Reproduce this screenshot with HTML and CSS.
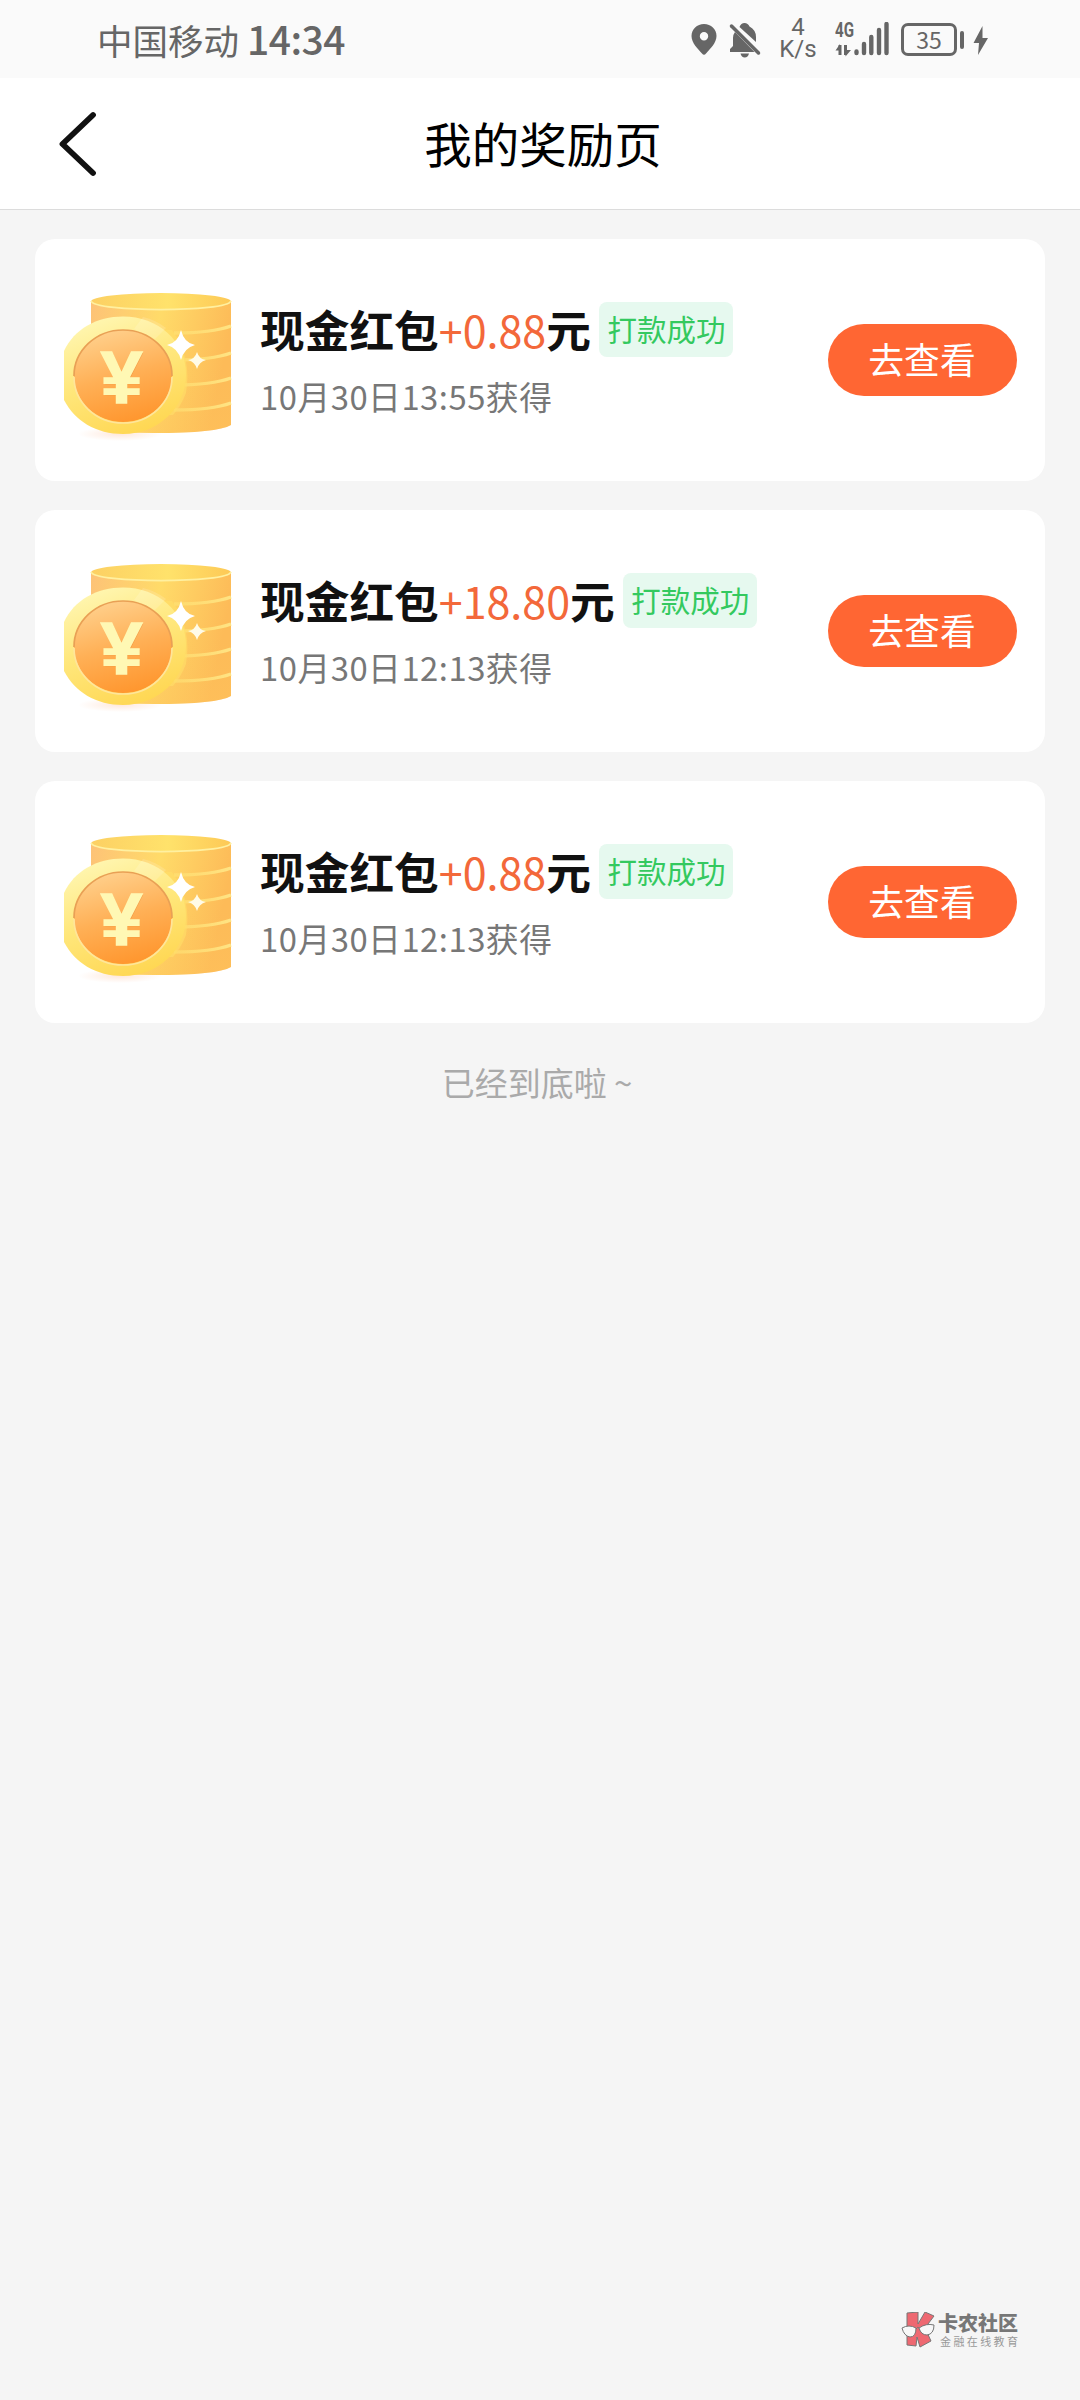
FILE: index.html
```html
<!DOCTYPE html>
<html lang="zh-CN">
<head>
<meta charset="utf-8">
<title>我的奖励页</title>
<link rel="stylesheet" href="styles.css">
</head>
<body>
<svg class="defs" width="0" height="0" aria-hidden="true">
  <defs>
    <linearGradient id="side" x1="0" y1="0" x2="1" y2=".2"><stop offset="0" stop-color="#fdc277"/><stop offset=".5" stop-color="#ffdb69"/><stop offset="1" stop-color="#fdbb58"/></linearGradient>
    <linearGradient id="shade" x1="0" y1="0" x2="0" y2="1"><stop offset=".5" stop-color="#ffc45c" stop-opacity="0"/><stop offset="1" stop-color="#ffc45c" stop-opacity=".4"/></linearGradient>
    <linearGradient id="lid" x1="0" y1="0" x2="1" y2="0"><stop offset="0" stop-color="#fcd063"/><stop offset=".55" stop-color="#ffe26b"/><stop offset="1" stop-color="#fdc956"/></linearGradient>
    <linearGradient id="rim" x1=".3" y1="0" x2=".7" y2="1"><stop offset="0" stop-color="#fff6b0"/><stop offset=".45" stop-color="#ffe77c"/><stop offset="1" stop-color="#ffd650"/></linearGradient>
    <linearGradient id="face" x1=".3" y1="0" x2=".6" y2="1"><stop offset="0" stop-color="#ffd08c"/><stop offset=".5" stop-color="#ffb056"/><stop offset="1" stop-color="#ff962e"/></linearGradient>
    <linearGradient id="line" x1="0" y1="0" x2="1" y2="0"><stop offset="0" stop-color="#ffe678" stop-opacity=".5"/><stop offset="1" stop-color="#ffe484"/></linearGradient>
    <radialGradient id="glow"><stop offset="0" stop-color="#ffb38a" stop-opacity=".3"/><stop offset="1" stop-color="#ffb38a" stop-opacity="0"/></radialGradient>
    <symbol id="coins" viewBox="0 0 176 176">
      <ellipse cx="58" cy="151" rx="42" ry="7" fill="url(#glow)"/>
      <path d="M29 18V140Q32 150 92 150Q155 150 169 142V18Z" fill="url(#side)"/>
      <path d="M29 18V140Q32 150 92 150Q155 150 169 142V18Z" fill="url(#shade)"/>
      <g fill="none" stroke="url(#line)" stroke-width="3.400">
        <path d="M112 50Q150 50 169 43"/><path d="M112 77Q150 77 169 70"/>
        <path d="M112 102Q150 102 169 95"/><path d="M112 127Q150 127 169 120"/>
      </g>
      <ellipse cx="99" cy="18.500" rx="70" ry="8.500" fill="url(#lid)"/>
      <path d="M29 18C33 29.500 165 29.500 169 18" fill="none" stroke="#fff0a0" stroke-width="1.800"/>
      <path d="M110 47Q130 74 124 110Q119 123 111 132H100V47Z" fill="#ffdf68" opacity=".6"/>
      <path d="M2 68C12 46 35 33.500 61 33.500C96 33.500 124 58 124 91.500C124 125 96 151 61 151C34 151 13 138 2 117Z" fill="url(#rim)"/>
      <path d="M72 46L81 34Q94 37 104 45L93 56Z" fill="#fff" opacity=".15"/>
      <ellipse cx="61" cy="93" rx="49" ry="46" fill="url(#face)"/>
      <path d="M12 93A49 46 0 0 1 110 93" fill="none" stroke="#e9a055" stroke-width="1.700"/>
      <path d="M12 94A49 46 0 0 0 110 94" fill="none" stroke="#ffe59a" stroke-width="1.700"/>
      <text x="60.500" y="120.500" class="yen yen-shadow">¥</text>
      <text x="59.500" y="119.500" class="yen">¥</text>
      <path d="M119 47Q122 60 133 62Q122 65 119 77Q116 65 105 62Q116 60 119 47Z" fill="#fff"/>
      <path d="M135 69Q137 76 144 77Q137 79 135 86Q133 79 126 77Q133 76 135 69Z" fill="#fffbe8"/>
    </symbol>
  </defs>
</svg>

<header class="status">
  <div class="carrier">中国移动 <span class="clock">14:34</span></div>
  <div class="indicators">
    <svg class="pin" width="26" height="33" viewBox="0 0 26 33"><path fill-rule="evenodd" d="M13 1C6 1 .5 6.300.5 13C.5 20 7 26 11 30.500Q13 33 15 30.500C19 26 25.500 20 25.500 13C25.500 6.300 20 1 13 1ZM13 9A4.200 4.200 0 1 1 13 17.400A4.200 4.200 0 1 1 13 9Z"/></svg>
    <svg class="bell" width="32" height="36" viewBox="0 0 32 36"><path d="M6 10L25.500 30H1V27L4 24V16Q4 12.500 6 10ZM10.500 5Q12 1 15.500 1Q19 1 20.500 4.500Q27 8 27 15V20Z"/><path d="M11.500 31.500H20Q19 35.500 15.700 35.500Q12.500 35.500 11.500 31.500Z"/><path d="M2.500 4L29.500 31" fill="none" stroke="#666" stroke-width="3.500" stroke-linecap="round"/></svg>
    <div class="speed"><span>4</span><span>K/s</span></div>
    <div class="signal">
      <span class="network">4G</span>
      <svg width="54" height="36" viewBox="0 0 54 36"><path d="M5 23V33M10.500 23V33" fill="none" stroke="#666" stroke-width="3"/><path d="M5 22L.5 28.500H5ZM10.500 34.500L16 28H10.500Z"/><path d="M21.500 29.500V31M29 22V31M36.300 15V31M44 8V31M51.500 2V31" fill="none" stroke="#666" stroke-width="4.400" stroke-linecap="round"/></svg>
    </div>
    <div class="battery">35</div><i class="terminal"></i>
    <svg class="bolt" width="16" height="30" viewBox="0 0 16 30"><path d="M9.500 0L.5 17H6L5 29L15 12H9.500Z"/></svg>
  </div>
</header>

<nav class="navbar">
  <svg class="back" width="40" height="66" viewBox="0 0 40 66"><path d="M36 4L5.500 33L36 62" fill="none" stroke="#111" stroke-width="5.800" stroke-linecap="round" stroke-linejoin="round"/></svg>
  <h1>我的奖励页</h1>
</nav>

<main class="list">
  <section class="card">
    <svg class="coins"><use href="#coins"/></svg>
    <div class="info">
      <div class="title"><span>现金红包</span><span class="amount">+0.88</span><span>元</span><span class="tag">打款成功</span></div>
      <div class="date">10月30日13:55获得</div>
    </div>
    <button class="view">去查看</button>
  </section>
  <section class="card">
    <svg class="coins"><use href="#coins"/></svg>
    <div class="info">
      <div class="title"><span>现金红包</span><span class="amount">+18.80</span><span>元</span><span class="tag">打款成功</span></div>
      <div class="date">10月30日12:13获得</div>
    </div>
    <button class="view">去查看</button>
  </section>
  <section class="card">
    <svg class="coins"><use href="#coins"/></svg>
    <div class="info">
      <div class="title"><span>现金红包</span><span class="amount">+0.88</span><span>元</span><span class="tag">打款成功</span></div>
      <div class="date">10月30日12:13获得</div>
    </div>
    <button class="view">去查看</button>
  </section>
  <p class="end">已经到底啦 ~</p>
</main>

<footer class="brand">
  <svg width="34" height="36" viewBox="0 0 34 36"><path d="M6 1L17 0V12L24 0L33 4L24 16L30 29L19 35L16 25L15 34L6 33Z" fill="#ee6871" stroke="#777" stroke-width="1"/><g fill="#f8f8f8" stroke="#777" stroke-width="1"><path d="M1 16Q8 12 15 16Q15 25 9 25Q3 24 1 16Z"/><path d="M18 16Q25 11 33 13Q33 22 26 23Q20 23 18 16Z"/><path d="M15 17Q17 14 18 16" fill="none"/></g></svg>
  <div class="brand-text"><b>卡农社区</b><span>金融在线教育</span></div>
</footer>
</body>
</html>
```
FILE: styles.css
```css
* { box-sizing: border-box; }
body {
  margin: 0;
  width: 1080px;
  height: 2400px;
  display: flex;
  flex-direction: column;
  background: #f5f5f5;
  font-family: "Noto Sans CJK SC", sans-serif;
  color: #111;
}
.defs { position: absolute; }

.status {
  height: 78px;
  flex: none;
  padding: 0 91px 0 97px;
  display: flex;
  justify-content: space-between;
  background: #fafafa;
  color: #666;
  fill: #666;
}
.carrier { font-size: 35.5px; line-height: 79px; white-space: nowrap; }
.clock { font-size: 39px; font-weight: 500; letter-spacing: -.5px; line-height: 1; }
.indicators { display: flex; align-items: flex-start; }
.pin { margin-top: 23px; }
.bell { margin: 22px 0 0 12px; }
.speed {
  width: 40px;
  margin: 17px 0 0 17px;
  display: flex;
  flex-direction: column;
  align-items: center;
  gap: 2px;
  font: 400 24px/20px Roboto, sans-serif;
}
.signal { position: relative; width: 54px; height: 36px; margin: 22px 0 0 17px; }
.signal svg { display: block; }
.network { position: absolute; left: 0; top: -1px; font: 700 21px/18px Roboto, sans-serif; transform: scaleX(.72); transform-origin: left; }
.battery {
  width: 56px;
  height: 33px;
  margin: 23px 0 0 12px;
  border: 3px solid #666;
  border-radius: 7px;
  font-size: 23px;
  line-height: 26px;
  text-align: center;
}
.terminal { width: 4px; height: 18px; margin: 31px 0 0 3px; border-radius: 2px; background: #666; }
.bolt { margin: 26px 0 0 9px; }

.navbar {
  height: 132px;
  flex: none;
  padding: 0 57px;
  display: grid;
  grid-template-columns: 40px 1fr 40px;
  align-items: center;
  background: #fff;
  border-bottom: 1px solid #dcdcdc;
}
.navbar h1 { margin: 0 0 2px; font-size: 47.5px; font-weight: 400; line-height: 70px; text-align: center; color: #000; padding-left: 6px; }

.list { padding: 29px 35px 0; display: flex; flex-direction: column; gap: 29px; }
.card {
  height: 242px;
  padding: 0 28px 0 27px;
  display: flex;
  align-items: center;
  background: #fff;
  border-radius: 20px;
}
.coins { width: 176px; height: 176px; flex: none; margin-top: 22px; }
.yen { font: 700 75px "Liberation Sans", sans-serif; text-anchor: middle; fill: #fff8b4; stroke: #fff8b4; stroke-width: 1.5px; }
.yen-shadow { fill: #e88a34; stroke: none; opacity: .5; }
.info { flex: 1; margin: -2px 0 0 22px; }
.title { display: flex; align-items: center; height: 62px; font-size: 44.7px; font-weight: 700; line-height: 62px; white-space: nowrap; }
.amount { font-size: 43px; font-weight: 400; color: #f3683a; }
.tag {
  height: 55px;
  margin: 1px 0 0 8.5px;
  padding: 0 8px;
  border-radius: 8px;
  background: #e6f9ef;
  color: #34c95f;
  font-size: 29.5px;
  font-weight: 400;
  line-height: 52px;
}
.date { font-size: 32.8px; line-height: 48px; margin-top: 12px; letter-spacing: .5px; color: #777; }
.view {
  width: 189px;
  height: 72px;
  border: 0;
  padding: 0 1px 3px 0;
  border-radius: 36px;
  background: #ff6633;
  color: #fff;
  font: 400 35.8px/69px "Noto Sans CJK SC", sans-serif;
}
.end { margin: 6px 0 0; padding-right: 6px; text-align: center; font-size: 33px; line-height: 48px; color: #aaa; }

.brand { margin: auto 62px 52px auto; display: flex; align-items: center; gap: 3px; }
.brand-text { display: flex; flex-direction: column; color: #777; white-space: nowrap; }
.brand-text b { font-size: 20px; line-height: 22px; font-weight: 900; }
.brand-text span { margin-left: 2px; font-size: 11px; line-height: 14px; letter-spacing: 2.4px; color: #999; margin-right: -4px; }
```
